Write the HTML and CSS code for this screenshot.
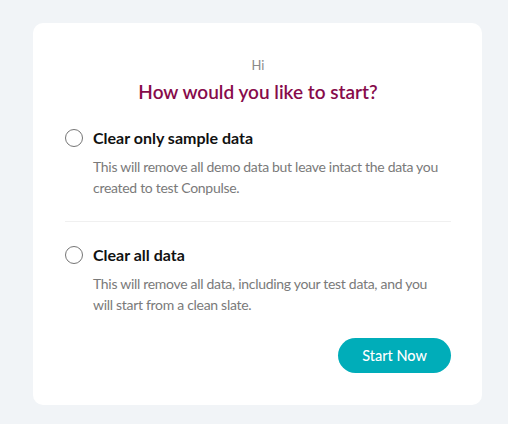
FILE: index.html
```html
<!DOCTYPE html>
<html>
<head>
<meta charset="utf-8">
<link rel="stylesheet" href="styles.css">
</head>
<body>
<div class="card">
  <p class="hi">Hi</p>
  <h1 class="title">How would you like to start?</h1>
  <div class="option">
    <div class="option-head">
      <span class="radio"></span>
      <span class="option-title">Clear only sample data</span>
    </div>
    <p class="option-desc">This will remove all demo data but leave intact the data you created to test Conpulse.</p>
  </div>
  <div class="divider"></div>
  <div class="option option-second">
    <div class="option-head">
      <span class="radio"></span>
      <span class="option-title">Clear all data</span>
    </div>
    <p class="option-desc">This will remove all data, including your test data, and you will start from a clean slate.</p>
  </div>
  <div class="actions">
    <button class="btn">Start Now</button>
  </div>
</div>
</body>
</html>
```
FILE: styles.css
```css
html, body {
  margin: 0;
  padding: 0;
}
body {
  background: #f1f4f7;
  width: 508px;
  height: 424px;
  font-family: "Lato", "Open Sans", sans-serif;
  padding: 23px 0 0 33px;
  box-sizing: border-box;
}
.card {
  width: 449px;
  height: 382px;
  box-sizing: border-box;
  background: #fff;
  border-radius: 10px;
  padding: 33px 31px 0 32px;
}
.hi {
  margin: 0;
  text-align: center;
  color: #8a8a8a;
  font-size: 13px;
  line-height: 18px;
}
.title {
  margin: 6px 0 0;
  text-align: center;
  color: #870b4b;
  font-size: 19px;
  font-weight: 600;
  line-height: 24px;
}
.option {
  margin-top: 23px;
}
.option-second {
  margin-top: 22px;
}
.option-head {
  display: flex;
  align-items: center;
  gap: 10px;
}
.radio {
  width: 18px;
  height: 18px;
  box-sizing: border-box;
  border: 1.5px solid #757575;
  border-radius: 50%;
  flex: none;
}
.option-title {
  font-size: 16px;
  font-weight: 700;
  color: #111;
  line-height: 22px;
}
.option-desc {
  margin: 7px 0 0 28px;
  max-width: 350px;
  font-size: 14px;
  letter-spacing: -0.3px;
  line-height: 21px;
  color: #7a7a7a;
}
.divider {
  margin-top: 23px;
  height: 1px;
  background: #f0f0f0;
}
.actions {
  display: flex;
  justify-content: flex-end;
  margin-top: 23px;
}
.btn {
  width: 113px;
  height: 35px;
  border: none;
  border-radius: 18px;
  background: #00adb9;
  color: #fff;
  font-family: inherit;
  font-size: 14.5px;
  font-weight: 500;
}
```
